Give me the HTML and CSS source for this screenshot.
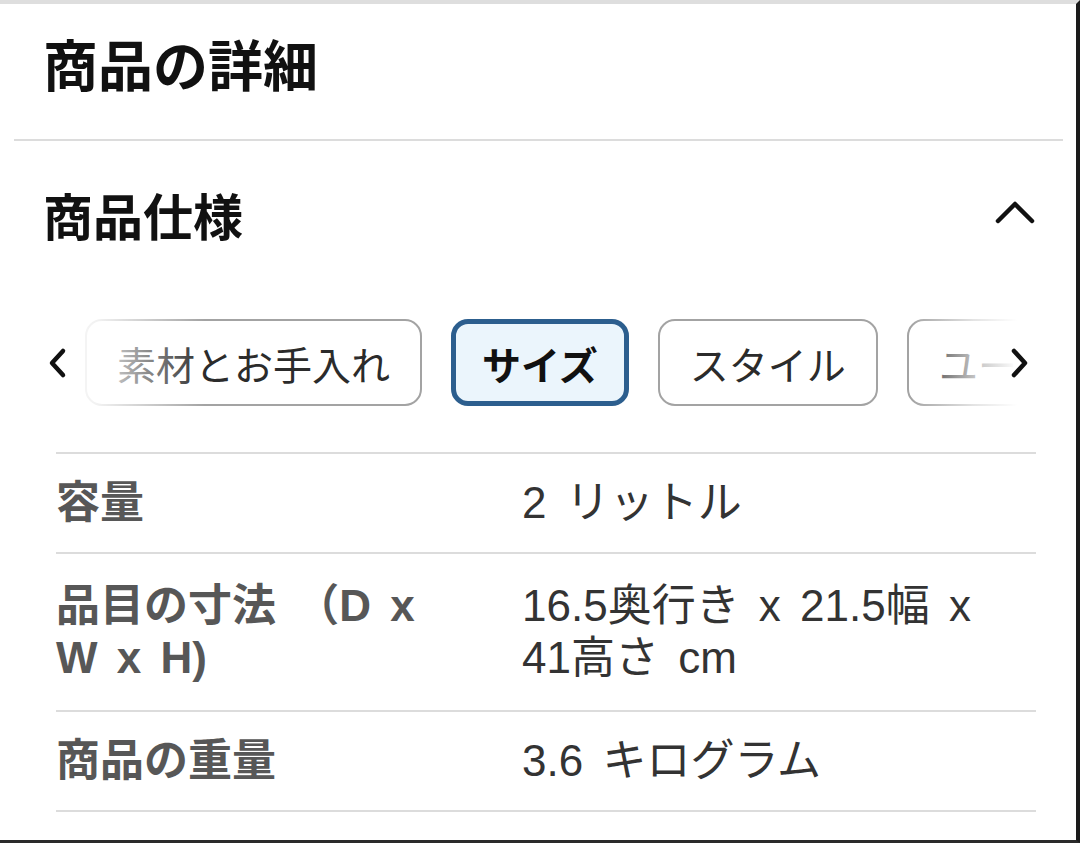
FILE: index.html
```html
<!DOCTYPE html>
<html lang="ja">
<head>
<meta charset="utf-8">
<title>商品の詳細</title>
<link rel="stylesheet" href="styles.css">
</head>
<body>
<div class="page">
  <h1 class="title">商品の詳細</h1>
  <div class="divider"></div>
  <div class="spec-head">
    <h2 class="spec-title">商品仕様</h2>
    <svg class="collapse" width="40" height="30" viewBox="0 0 40 30" aria-hidden="true">
      <path d="M3 24 L20 7 L37 24" fill="none" stroke="#111" stroke-width="4.5" stroke-linecap="round" stroke-linejoin="round"/>
    </svg>
  </div>
  <div class="chips-wrap">
    <div class="chips">
      <span class="chip">素材とお手入れ</span>
      <span class="chip chip-active">サイズ</span>
      <span class="chip">スタイル</span>
      <span class="chip chip-cut">ユー</span>
    </div>
    <div class="fade fade-left"></div>
    <div class="fade fade-right"></div>
    <svg class="arrow arrow-left" width="20" height="32" viewBox="0 0 20 32" aria-hidden="true">
      <path d="M15 4 L4 16 L15 28" fill="none" stroke="#111" stroke-width="4.5" stroke-linecap="round" stroke-linejoin="round"/>
    </svg>
    <svg class="arrow arrow-right" width="20" height="32" viewBox="0 0 20 32" aria-hidden="true">
      <path d="M5 4 L16 16 L5 28" fill="none" stroke="#111" stroke-width="4.5" stroke-linecap="round" stroke-linejoin="round"/>
    </svg>
  </div>
  <div class="table">
    <div class="row">
      <div class="label">容量</div>
      <div class="value">2 リットル</div>
    </div>
    <div class="row row-tall">
      <div class="label">品目の寸法 （D x<br>W x H)</div>
      <div class="value">16.5奥行き x 21.5幅 x<br>41高さ cm</div>
    </div>
    <div class="row">
      <div class="label">商品の重量</div>
      <div class="value">3.6 キログラム</div>
    </div>
  </div>
</div>
</body>
</html>
```
FILE: styles.css
```css
* {
  box-sizing: border-box;
}

html, body {
  margin: 0;
  padding: 0;
  background: #ffffff;
}

body {
  font-family: "Liberation Sans", "Noto Sans CJK JP", sans-serif;
  color: #111111;
}

.page {
  width: 1080px;
  height: 843px;
  border-top: 4px solid #dedede;
  border-right: 4px solid #1b1b1b;
  border-bottom: 3px solid #2a2a2a;
  overflow: hidden;
  background: #ffffff;
}

.title {
  margin: 0;
  padding: 25px 0 0 43px;
  font-family: "Noto Sans CJK JP", sans-serif;
  font-size: 55px;
  line-height: 66px;
  font-weight: 700;
  color: #111111;
}

.divider {
  height: 2px;
  margin: 44px 13px 0 14px;
  background: #dcdcdc;
}

.spec-head {
  display: flex;
  justify-content: space-between;
  align-items: flex-start;
  padding: 43px 41px 0 43px;
}

.spec-title {
  margin: 0;
  font-family: "Noto Sans CJK JP", sans-serif;
  font-size: 50px;
  line-height: 60px;
  font-weight: 700;
  color: #111111;
}

.collapse {
  margin-top: 13px;
}

.chips-wrap {
  position: relative;
  width: 996px;
  height: 87px;
  margin: 75px 0 0 40px;
  overflow: hidden;
}

.chips {
  display: flex;
  gap: 29px;
  padding-left: 45px;
  height: 100%;
}

.chip {
  flex: none;
  display: flex;
  align-items: center;
  height: 87px;
  padding: 0 30px;
  border: 2px solid #a3a3a3;
  border-radius: 17px;
  font-family: "Noto Sans CJK JP", sans-serif;
  font-size: 39px;
  color: #2b2b2b;
  background: #ffffff;
  white-space: nowrap;
}

.chip-active {
  padding: 0 26px;
  border: 5px solid #2c5e8e;
  background: #ebf5fc;
  font-weight: 700;
  color: #111111;
}

.chip-cut {
  padding-right: 140px;
}

.fade {
  position: absolute;
  top: 0;
  bottom: 0;
}

.fade-left {
  left: 0;
  width: 165px;
  background: linear-gradient(to right, #ffffff 0%, rgba(255, 255, 255, 0.85) 35%, rgba(255, 255, 255, 0) 100%);
}

.fade-right {
  right: 0;
  width: 125px;
  background: linear-gradient(to right, rgba(255, 255, 255, 0) 0%, rgba(255, 255, 255, 0.7) 50%, #ffffff 85%);
}

.arrow {
  position: absolute;
  top: 28px;
}

.arrow-left {
  left: 8px;
}

.arrow-right {
  right: 7px;
}

.table {
  margin: 46px 40px 0 56px;
  border-bottom: 2px solid #dcdcdc;
}

.row {
  display: grid;
  grid-template-columns: 466px 1fr;
  padding: 23px 0;
  border-top: 2px solid #dcdcdc;
  font-size: 44px;
  line-height: 52px;
  word-spacing: 7px;
  white-space: nowrap;
}

.row-tall {
  padding: 26px 0;
}

.label {
  font-weight: 700;
  color: #575757;
}

.value {
  color: #333333;
}
```
